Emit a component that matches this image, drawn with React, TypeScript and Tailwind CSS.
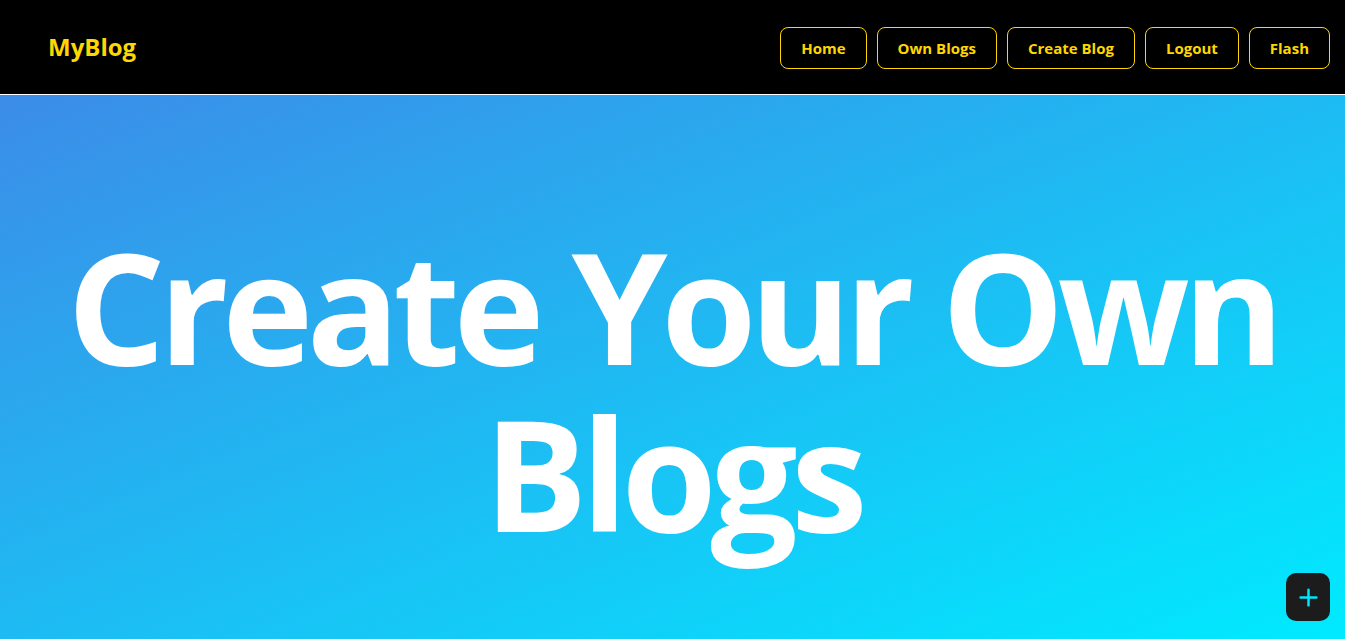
import { Plus } from "lucide-react";

const NAV_LINKS = ["Home", "Own Blogs", "Create Blog", "Logout", "Flash"];

export default function App() {
  return (
    <div
      className="min-h-screen bg-white"
      style={{ fontFamily: "'Open Sans', 'Noto Sans', sans-serif" }}
    >
      {/* Navbar */}
      <nav className="flex h-[95px] items-center justify-between border-b border-white bg-black pl-12 pr-[15px]">
        <span className="text-2xl font-bold text-[#ffd700]">MyBlog</span>

        <div className="flex items-center gap-[10px] pt-[2px]">
          {NAV_LINKS.map((link) => (
            <button
              key={link}
              className="flex h-[42px] items-center rounded-lg border border-[#ffd700] bg-black px-5 text-[15px] font-bold text-[#ffd700]"
            >
              {link}
            </button>
          ))}
        </div>
      </nav>

      {/* Hero */}
      <section className="h-[544px] overflow-hidden bg-linear-to-br/srgb from-[#3c8ce7] to-[#00eaff] pt-[127px]">
        <h1 className="text-center text-[154px] font-bold leading-[167px] tracking-[-6.5px] text-white">
          <span className="block whitespace-nowrap">Create Your Own</span>
          <span className="block whitespace-nowrap">Blogs</span>
        </h1>
      </section>

      {/* Floating create button */}
      <button className="fixed bottom-[18px] right-[15px] flex h-[48px] w-[44px] items-center justify-center rounded-[10px] bg-[#1c1c1c] text-[#00e5ff]">
        <Plus size={27} strokeWidth={2.2} />
      </button>
    </div>
  );
}
